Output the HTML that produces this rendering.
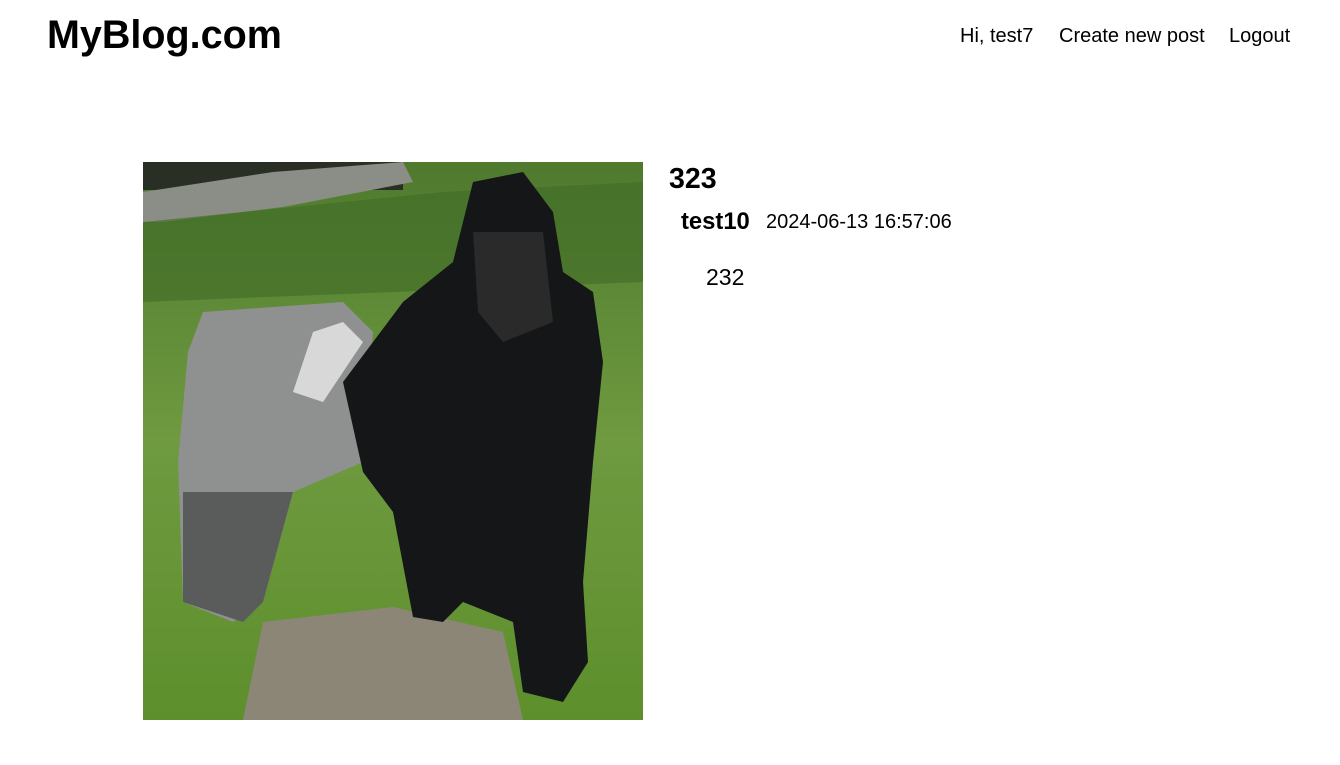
<!DOCTYPE html>
<html><head><meta charset="utf-8"><style>
body{margin:0;background:#fff;font-family:"Liberation Sans",Arial,sans-serif;color:#000;width:1340px;height:765px;overflow:hidden;position:relative}
.a{position:absolute;white-space:nowrap}
</style></head><body>
<div class="a" style="left:47px;top:13px;font-size:39.5px;font-weight:bold">MyBlog.com</div>
<div class="a" style="left:960px;top:25px;font-size:20px">Hi, test7</div>
<div class="a" style="left:1059px;top:25px;font-size:20px">Create new post</div>
<div class="a" style="left:1229px;top:25px;font-size:20px">Logout</div>
<svg class="a" style="left:143px;top:162px" width="500" height="558" viewBox="0 0 500 558">
<defs><linearGradient id="g" x1="0" y1="0" x2="0" y2="1"><stop offset="0" stop-color="#4f7a2e"/><stop offset=".5" stop-color="#6f9a40"/><stop offset="1" stop-color="#5d8f2c"/></linearGradient></defs>
<rect width="500" height="558" fill="url(#g)"/>
<rect width="260" height="28" fill="#2a2f25"/>
<path d="M0 30 L130 10 L260 0 L270 20 L140 45 L20 60 L0 60Z" fill="#8a8e86"/>
<path d="M0 60 L300 30 L500 20 L500 120 L0 140Z" fill="#3f6a26" opacity=".6"/>
<path d="M120 460 L250 445 L360 470 L380 558 L100 558Z" fill="#8c8676"/>
<path d="M60 150 L200 140 L230 170 L220 300 L150 330 L120 440 L90 460 L40 440 L35 300 L45 190Z" fill="#8f9190"/>
<path d="M150 330 L120 440 L100 460 L40 440 L40 330Z" fill="#5a5c5c"/>
<path d="M330 20 L380 10 L410 50 L420 110 L450 130 L460 200 L450 300 L440 420 L445 500 L420 540 L380 530 L370 460 L320 440 L300 460 L270 455 L250 350 L220 310 L200 220 L260 140 L310 100Z" fill="#151617"/>
<path d="M200 160 L220 180 L180 240 L150 230 L170 170Z" fill="#d8d8d8"/>
<path d="M330 70 L400 70 L410 160 L360 180 L335 150Z" fill="#2a2a2a"/>
</svg>
<div class="a" style="left:669px;top:163px;font-size:28.5px;font-weight:bold">323</div>
<div class="a" style="left:681px;top:208px;font-size:23.8px;font-weight:bold">test10</div>
<div class="a" style="left:766px;top:211px;font-size:20px">2024-06-13 16:57:06</div>
<div class="a" style="left:706px;top:264px;font-size:23px">232</div>
</body></html>
